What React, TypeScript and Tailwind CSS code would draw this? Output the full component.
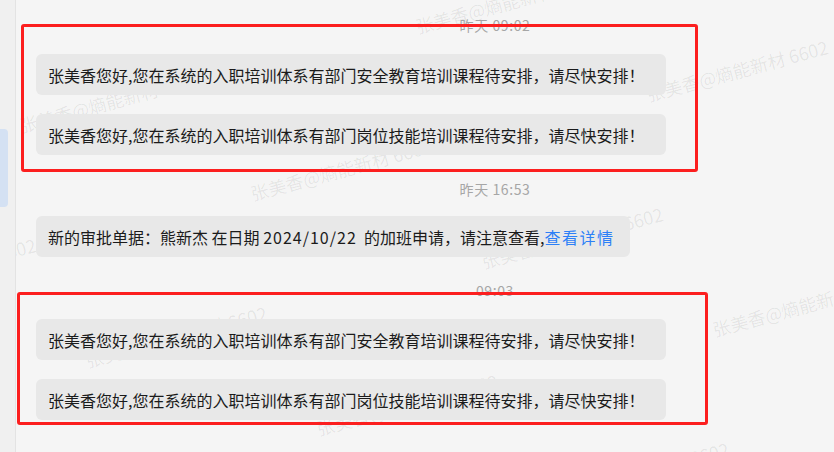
const FONT = "font-['Noto_Sans_CJK_SC',sans-serif]";

const V1 = { x: 231, y: 68 };
const V2 = { x: -165, y: 167 };
const ORIGIN = { x: 418, y: 35 };

const marks: { x: number; y: number }[] = [];
for (let j = -1; j <= 3; j++) {
  for (let i = -3; i <= 3; i++) {
    const x = ORIGIN.x + i * V1.x + j * V2.x;
    const y = ORIGIN.y + i * V1.y + j * V2.y;
    if (x > -220 && x < 840 && y > -10 && y < 520) marks.push({ x, y });
  }
}

function Stamp({ children, className }: { children: string; className: string }) {
  return (
    <div className={`w-[958px] text-center text-[14px] leading-[20px] tracking-[0.6px] text-[#a6a6a6] ${className}`}>
      {children}
    </div>
  );
}

function Bubble({ children, className }: { children: React.ReactNode; className: string }) {
  return (
    <div
      className={`ml-[20px] flex h-[41px] w-fit items-center rounded-[6px] bg-[#e8e8e8] pl-3 text-[16px] leading-[22px] whitespace-pre text-[#1b1b1b] ${className}`}
    >
      {children}
    </div>
  );
}

const SAFETY = "张美香您好,您在系统的入职培训体系有部门安全教育培训课程待安排，请尽快安排！";
const SKILL = "张美香您好,您在系统的入职培训体系有部门岗位技能培训课程待安排，请尽快安排！";

export default function App() {
  return (
    <div className={`relative flex h-[452px] w-[834px] overflow-hidden bg-[#f5f5f5] ${FONT}`}>
      {/* watermark, sits under the bubbles */}
      <div className="pointer-events-none absolute inset-0">
        {marks.map((m, k) => (
          <span
            key={k}
            className="absolute origin-bottom-left -rotate-15 whitespace-nowrap text-[18px] leading-[18px] text-black/[0.075]"
            style={{ left: m.x, top: m.y - 18 }}
          >
            张美香@熵能新材 6602
          </span>
        ))}
      </div>

      <aside className="relative w-[16px] shrink-0 border-r border-[#e3e3e3] bg-[#f0f0f0]">
        <div className="mt-[129px] h-[78px] w-[8px] rounded-r-[4px] bg-[#d4e1f3]" />
      </aside>

      <main className="relative flex flex-1 flex-col pt-[15px]">
        <Stamp className="">昨天 09:02</Stamp>
        <Bubble className="mt-[19px] pr-[22px]">{SAFETY}</Bubble>
        <Bubble className="mt-[19px] pr-[22px]">{SKILL}</Bubble>

        <Stamp className="mt-[24px]">昨天 16:53</Stamp>
        <Bubble className="mt-[17px] pr-[16px]">
          新的审批单据：熊新杰 在日期 <span className="tracking-[1px]">2024/10/22</span>  的加班申请，请注意查看,
          <span className="tracking-[1.5px] text-[#2d80f7]">查看详情</span>
        </Bubble>

        <Stamp className="mt-[23px]">09:03</Stamp>
        <Bubble className="mt-[19px] pr-[22px]">{SAFETY}</Bubble>
        <Bubble className="mt-[19px] pr-[22px]">{SKILL}</Bubble>
      </main>

      {/* annotation boxes */}
      <div className="pointer-events-none absolute top-[24px] left-[21px] h-[148px] w-[677px] rounded-[3px] border-[3px] border-[#fc1f1f]" />
      <div className="pointer-events-none absolute top-[292px] left-[17px] h-[133px] w-[691px] rounded-[3px] border-[3px] border-[#fc1f1f]" />
    </div>
  );
}
